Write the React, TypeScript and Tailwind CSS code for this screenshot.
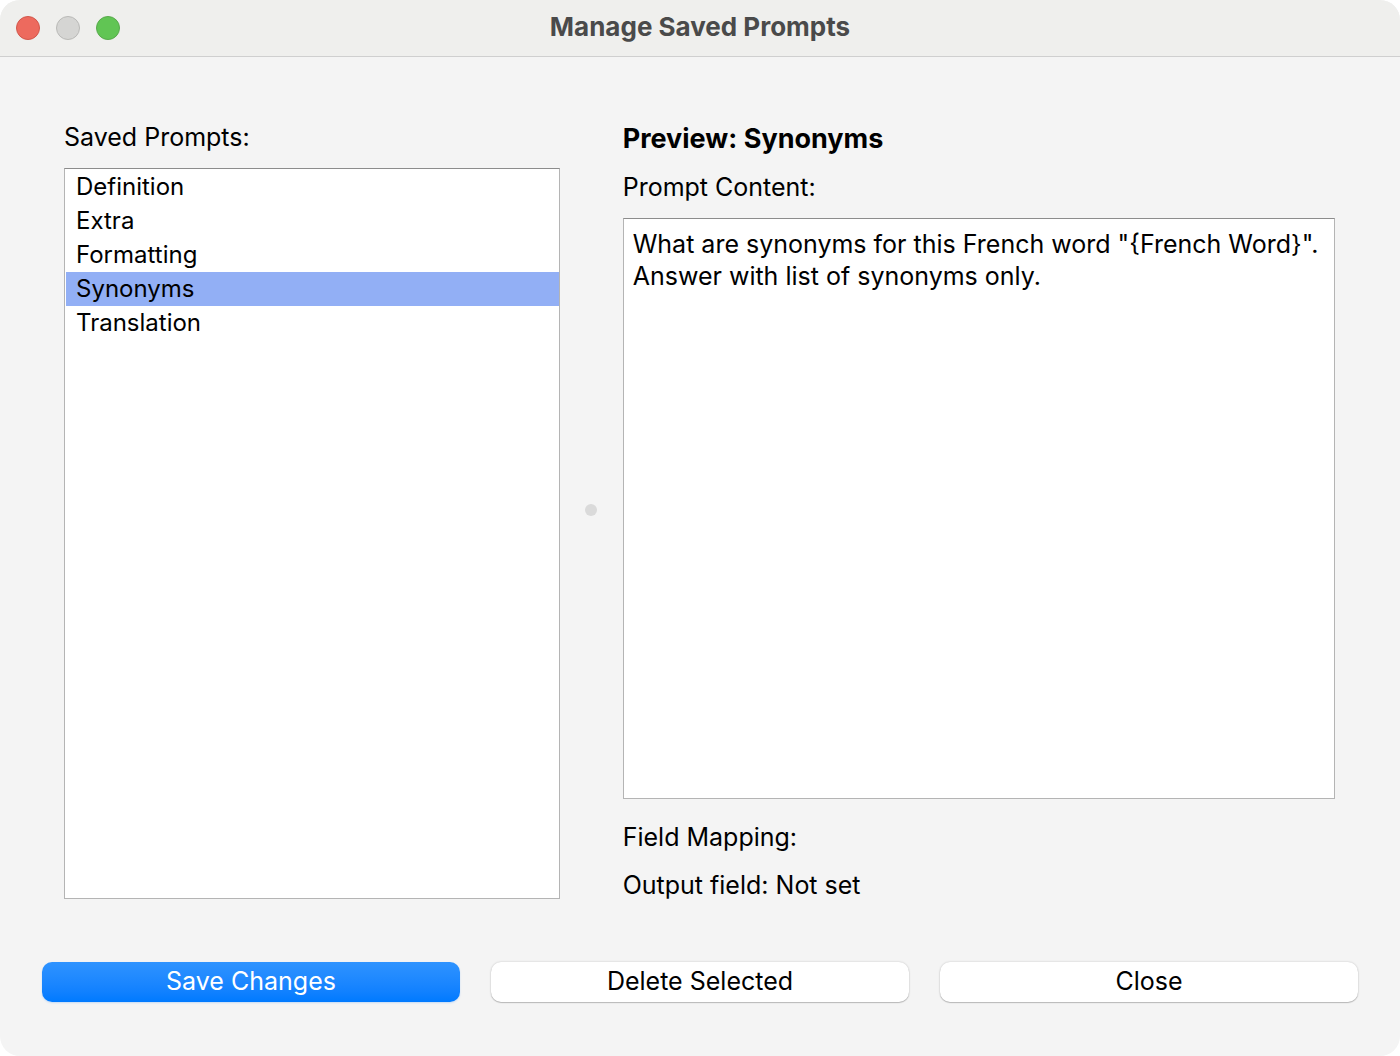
import { useState } from "react";

const prompts = ["Definition", "Extra", "Formatting", "Synonyms", "Translation"];

const plainButton =
  "h-10 rounded-[10px] bg-white pb-0.5 shadow-[0_0_2px_rgba(0,0,0,0.22),0_1px_1px_rgba(0,0,0,0.2)]";

export default function App() {
  const [selected, setSelected] = useState("Synonyms");
  const [content, setContent] = useState(
    'What are synonyms for this French word "{French Word}".\nAnswer with list of synonyms only.'
  );

  return (
    <div className="min-h-screen bg-white">
      <div className="flex min-h-screen flex-col overflow-hidden rounded-[20px] bg-[#f4f4f4] font-['Inter',sans-serif] text-[25px] leading-8 text-black">
        <header className="grid h-[57px] shrink-0 grid-cols-[1fr_auto_1fr] items-center border-b border-[#cfcfcf] bg-[#efefed] px-4">
          <div className="flex gap-4">
            <button aria-label="Close window" className="size-6 rounded-full border border-[#d1574b] bg-[#ed6a5e]" />
            <button aria-label="Minimize window" className="size-6 rounded-full border border-[#b9b9b7] bg-[#d5d5d3]" />
            <button aria-label="Zoom window" className="size-6 rounded-full border border-[#58a94c] bg-[#61c554]" />
          </div>
          <h1 className="pb-0.5 text-[26px] leading-8 font-bold text-[#4a4a4a]">Manage Saved Prompts</h1>
        </header>

        <main className="flex grow pt-16 pr-[65px] pb-[63px] pl-16">
          <section className="flex w-[39%] shrink-0 flex-col">
            <h2 id="saved-label" className="mb-[15px]">Saved Prompts:</h2>
            <div role="listbox" aria-labelledby="saved-label" className="flex grow flex-col border border-[#b4b4b4] border-t-[#8c8c8c] bg-white pt-px pl-px">
              {prompts.map((name) => (
                <button
                  key={name}
                  role="option"
                  aria-selected={name === selected}
                  onClick={() => setSelected(name)}
                  className={`h-[34px] pl-[10px] text-left text-[24px] leading-8 ${name === selected ? "bg-[#92aff5]" : ""}`}
                >
                  {name}
                </button>
              ))}
            </div>
          </section>

          <div role="separator" className="flex w-[63px] shrink-0 items-center justify-center">
            <div className="size-3 rounded-full bg-[#dadada]" />
          </div>

          <section className="flex min-w-0 grow flex-col">
            <h2 className="mb-4 pt-0.5 text-[27px] leading-8 font-bold">Preview: {selected}</h2>
            <label htmlFor="content" className="mb-[15px]">Prompt Content:</label>
            <textarea
              id="content"
              value={content}
              onChange={(e) => setContent(e.target.value)}
              className="block grow resize-none border border-[#b4b4b4] border-t-[#8c8c8c] bg-white px-[9px] py-[9px] outline-none"
            />
            <p className="mt-6 leading-7">Field Mapping:</p>
            <p className="mt-5 leading-7">Output field: Not set</p>
          </section>
        </main>

        <footer className="grid grid-cols-3 gap-[31px] px-[42px] pb-[54px]">
          <button className="h-10 rounded-[10px] bg-linear-to-b from-[#2e93ff] to-[#007aff] pb-0.5 text-white shadow-[0_1px_2px_rgba(0,122,255,0.2)]">
            Save Changes
          </button>
          <button className={plainButton}>Delete Selected</button>
          <button className={plainButton}>Close</button>
        </footer>
      </div>
    </div>
  );
}
